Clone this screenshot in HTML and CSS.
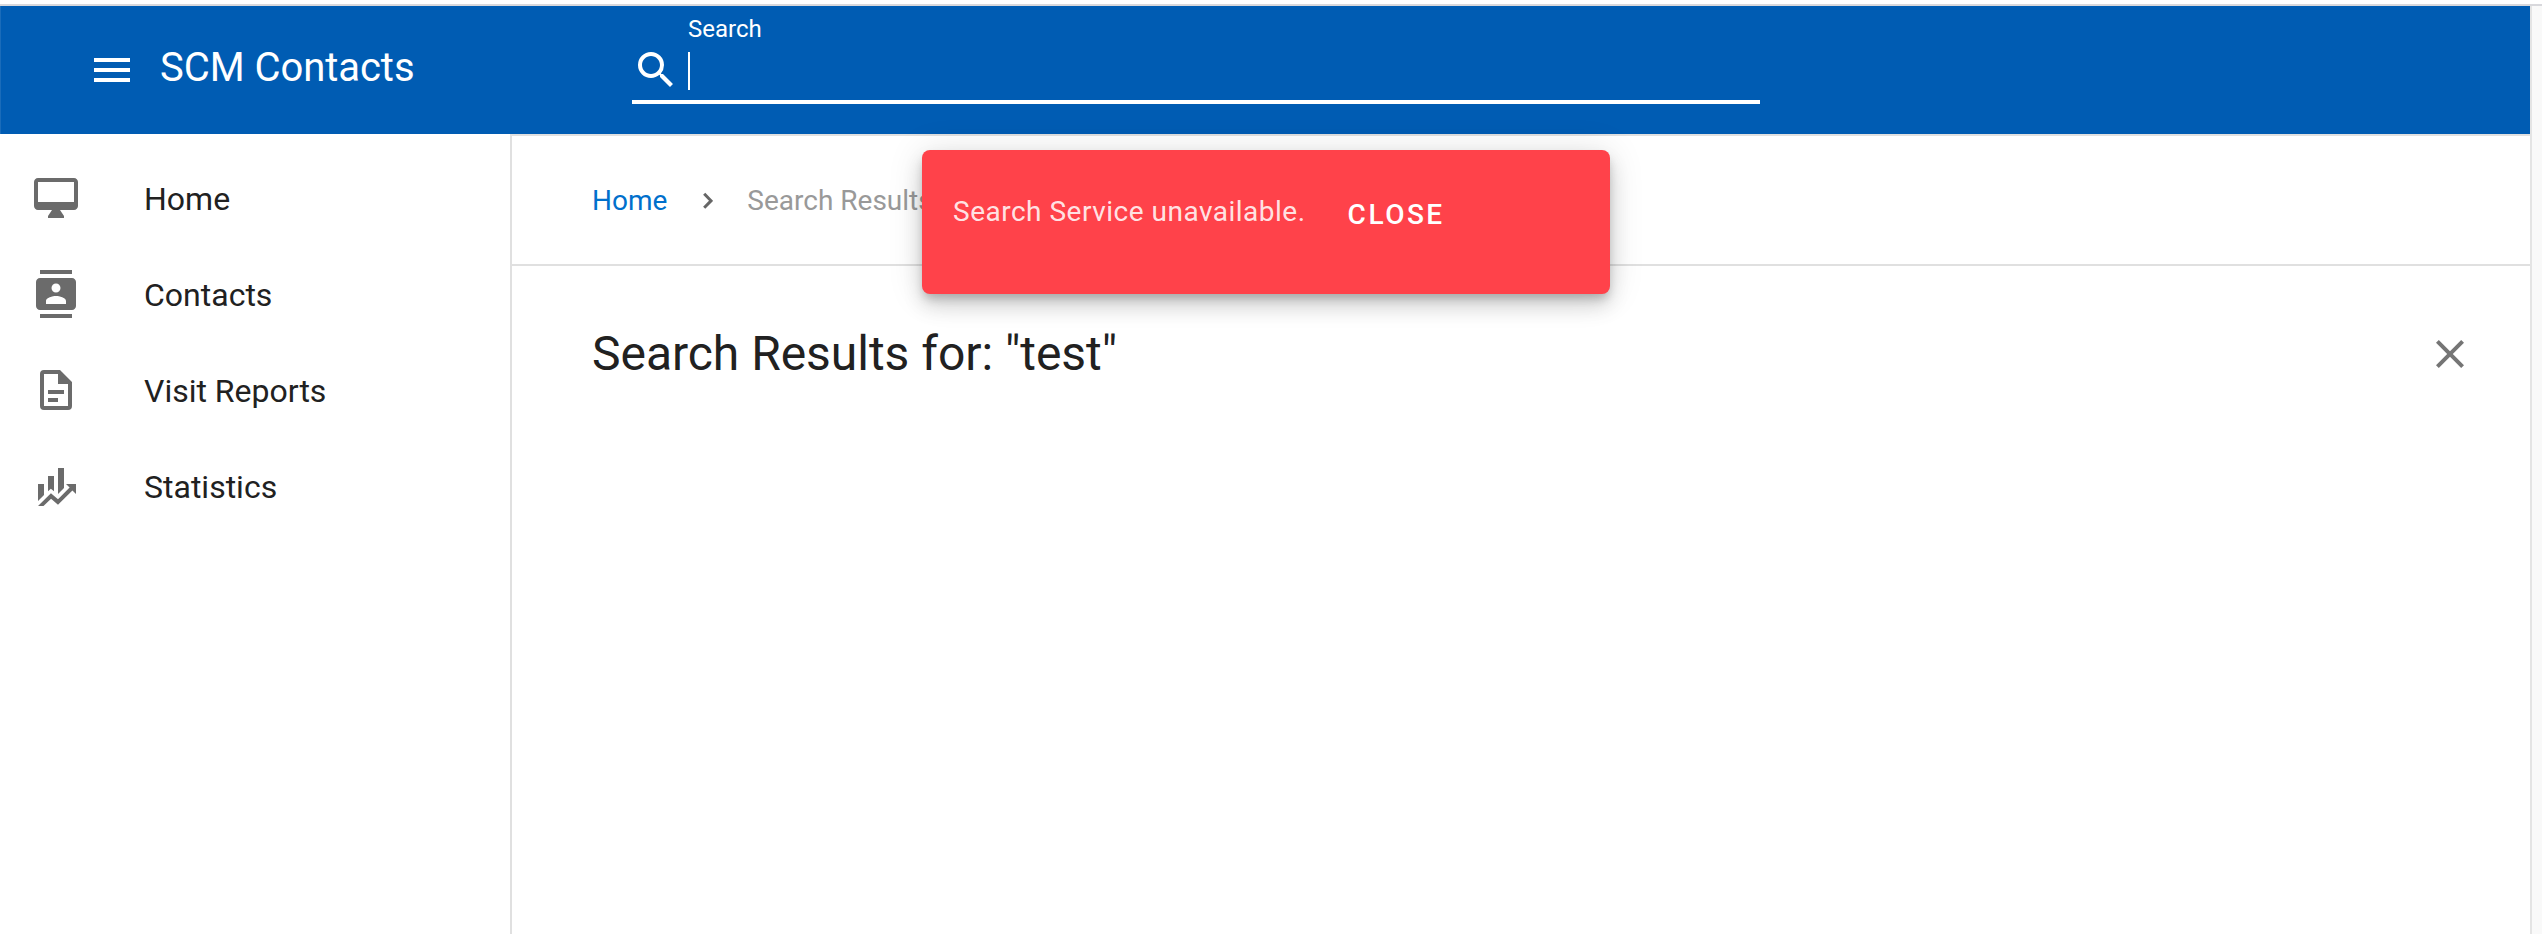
FILE: index.html
```html
<!DOCTYPE html>
<html lang="en">
<head>
<meta charset="utf-8">
<title>SCM Contacts</title>
<link rel="stylesheet" href="styles.css">
</head>
<body>
<div class="window">
  <div class="app">
    <header class="header">
      <svg class="icon menu" viewBox="0 0 24 24"><path d="M3 18h18v-2H3v2zm0-5h18v-2H3v2zm0-7v2h18V6H3z"/></svg>
      <div class="title">SCM Contacts</div>
      <div class="search">
        <svg class="icon" viewBox="0 0 24 24"><path d="M15.5 14h-.79l-.28-.27A6.47 6.47 0 0 0 16 9.500 6.500 6.500 0 1 0 9.500 16c1.610 0 3.090-.59 4.230-1.570l.27.28v.79l5 4.990L20.490 19l-4.990-5zm-6 0C7.010 14 5 11.990 5 9.500S7.010 5 9.500 5 14 7.010 14 9.500 11.990 14 9.500 14z"/></svg>
        <div class="field"><label class="label">Search</label><div class="caret"></div></div>
      </div>
    </header>
    <div class="body">
      <nav class="sidebar">
        <a class="item"><svg class="icon" viewBox="0 0 24 24"><path d="M21 2H3c-1.100 0-2 .9-2 2v12c0 1.100.9 2 2 2h7l-2 3v1h8v-1l-2-3h7c1.100 0 2-.9 2-2V4c0-1.100-.9-2-2-2zm0 12H3V4h18v10z"/></svg><span>Home</span></a>
        <a class="item"><svg class="icon" viewBox="0 0 24 24"><path d="M20 0H4v2h16V0zM4 24h16v-2H4v2zM20 4H4c-1.100 0-2 .9-2 2v12c0 1.100.9 2 2 2h16c1.100 0 2-.9 2-2V6c0-1.100-.9-2-2-2zm-8 2.750c1.240 0 2.250 1.010 2.250 2.250s-1.010 2.250-2.250 2.250S9.750 10.240 9.750 9 10.760 6.750 12 6.750zM17 17H7v-1.500c0-1.670 3.330-2.500 5-2.500s5 .83 5 2.500V17z"/></svg><span>Contacts</span></a>
        <a class="item"><svg class="icon" viewBox="0 0 24 24"><path d="M6 2a2 2 0 0 0-2 2v16a2 2 0 0 0 2 2h12a2 2 0 0 0 2-2V8l-6-6H6zm0 2h7v5h5v11H6V4zm2 8v2h8v-2H8zm0 4v2h5v-2H8z"/></svg><span>Visit Reports</span></a>
        <a class="item"><svg class="icon" viewBox="0 0 24 24"><path d="M6 16.500L3 19.440V11h3M11 14.660l-1.570-1.340L8 14.640V7h3M16 13l-3 3V3h3M18.810 12.810L17 11h5v5l-1.790-1.790L13 21.360l-3.470-3.020L5.750 22H3l6.470-6.340L13 18.640"/></svg><span>Statistics</span></a>
      </nav>
      <main class="content">
        <div class="crumbs">
          <a class="link">Home</a>
          <svg class="chevron" viewBox="0 0 10 18"><path d="M1.200 1.800L8 8.800 1.200 15.800"/></svg>
          <span>Search Results</span>
        </div>
        <div class="heading">
          <h1>Search Results for: "test"</h1>
          <svg class="icon" viewBox="0 0 24 24"><path d="M19 6.410L17.590 5 12 10.590 6.410 5 5 6.410 10.590 12 5 17.590 6.410 19 12 13.410 17.590 19 19 17.590 13.410 12z"/></svg>
        </div>
      </main>
    </div>
  </div>
  <div class="track"></div>
  <div class="snackbar"><span class="message">Search Service unavailable.</span><button class="action">CLOSE</button></div>
</div>
</body>
</html>
```
FILE: styles.css
```css
* { box-sizing: border-box; }
body { margin: 0; background: #fff; color: #212121; font-family: Roboto, sans-serif; overflow: hidden; }
.window { position: relative; display: flex; height: 930px; margin-top: 4px; border-top: 2px solid #d8d8dc; }
.app { flex: 1; display: flex; flex-direction: column; }
.track { width: 12px; border-left: 2px solid #e4e4e4; background: #f9f9f9; }
.icon { display: block; flex: none; width: 48px; height: 48px; fill: #6b6b6b; }
.header { display: flex; height: 128px; padding-left: 87px; background: #005cb3; color: #fff; border-left: 1px solid #1a6cba; }
.header .icon { fill: #fff; margin-top: 40px; }
.title { width: 472px; margin-left: 24px; padding-top: 38px; font-size: 40px; line-height: 48px; letter-spacing: -.05px; white-space: nowrap; }
.search { display: flex; width: 1128px; height: 98px; border-bottom: 4px solid #fff; }
.field { margin-left: 8px; }
.label { display: block; padding-top: 9px; font-size: 24px; line-height: 28px; }
.caret { width: 2px; height: 38px; margin-top: 9px; background: #fff; }
.body { flex: 1; display: flex; }
.sidebar { width: 510px; padding-top: 16px; }
.item { display: flex; align-items: center; height: 96px; padding-left: 32px; font-size: 32px; line-height: 40px; }
.item span { margin-left: 64px; padding-top: 2px; }
.content { flex: 1; border-left: 2px solid #e0e0e0; border-top: 2px solid #e0e0e0; }
.crumbs { display: flex; align-items: center; height: 130px; padding: 1px 0 0 80px; border-bottom: 2px solid #e0e0e0; font-size: 28px; line-height: 32px; color: #999; }
.link { color: #0070cc; }
.chevron { width: 10px; height: 18px; margin: 0 34px 0 36px; fill: none; stroke: #666; stroke-width: 3; }
.heading { display: flex; justify-content: space-between; padding: 58px 56px 0 80px; }
.heading .icon { margin-top: 6px; fill: #757575; }
h1 { margin: 0; font-size: 48px; line-height: 60px; font-weight: 400; letter-spacing: -.03px; }
.snackbar { position: absolute; left: 922px; top: 144px; width: 688px; height: 144px; display: flex; align-items: flex-start; padding: 44px 31px; border-radius: 8px; background: #ff424a; font-size: 28px; line-height: 36px; box-shadow: 0 6px 10px -2px rgba(0,0,0,.2), 0 12px 20px rgba(0,0,0,.14), 0 2px 36px rgba(0,0,0,.12); }
.message { color: rgba(255,255,255,.87); letter-spacing: .5px; }
.action { margin: 3px 0 0 42px; padding: 0; border: 0; background: none; color: #fff; font: 500 28px/36px Roboto, sans-serif; letter-spacing: 2.5px; }
```
